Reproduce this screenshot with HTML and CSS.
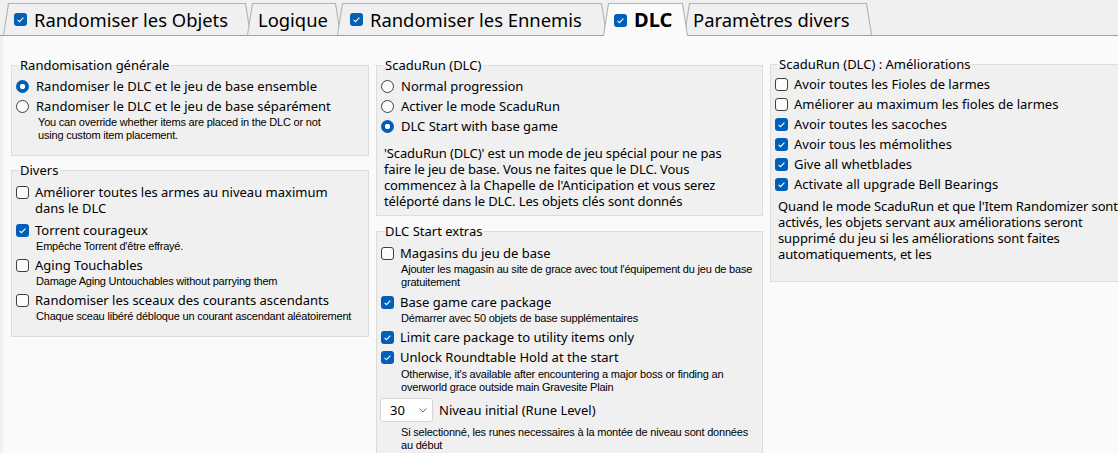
FILE: index.html
```html
<!DOCTYPE html>
<html lang="fr">
<head>
<meta charset="utf-8">
<title>DLC</title>
<link rel="stylesheet" href="styles.css">
</head>
<body>
<div class="tabs">
  <div class="tab t1"><div class="tab-in"><span class="cb on"><svg viewBox="0 0 13 13" width="13" height="13"><path d="M3.6 6.9 5.5 8.7 9.4 4.6" fill="none" stroke="#fff" stroke-width="1.1"/></svg></span><span class="tab-label">Randomiser les Objets</span></div></div>
  <div class="tab t2"><div class="tab-in"><span class="tab-label">Logique</span></div></div>
  <div class="tab t3"><div class="tab-in"><span class="cb on"><svg viewBox="0 0 13 13" width="13" height="13"><path d="M3.6 6.9 5.5 8.7 9.4 4.6" fill="none" stroke="#fff" stroke-width="1.1"/></svg></span><span class="tab-label">Randomiser les Ennemis</span></div></div>
  <div class="tab t4 active"><div class="tab-in"><span class="cb on"><svg viewBox="0 0 13 13" width="13" height="13"><path d="M3.6 6.9 5.5 8.7 9.4 4.6" fill="none" stroke="#fff" stroke-width="1.1"/></svg></span><span class="tab-label">DLC</span></div></div>
  <div class="tab t5"><div class="tab-in"><span class="tab-label">Paramètres divers</span></div></div>
</div>

<div class="page">
  <div class="col">
    <fieldset class="grp g-gen">
      <legend>Randomisation générale</legend>
      <div class="opt"><span class="rb on"></span><span class="lbl">Randomiser le DLC et le jeu de base ensemble</span></div>
      <div class="opt"><span class="rb"></span><span class="lbl">Randomiser le DLC et le jeu de base séparément</span></div>
      <div class="note nr">You can override whether items are placed in the DLC or not<br>using custom item placement.</div>
    </fieldset>

    <fieldset class="grp g-div">
      <legend>Divers</legend>
      <div class="opt wrap"><span class="cb"></span><span class="lbl">Améliorer toutes les armes au niveau maximum<br>dans le DLC</span></div>
      <div class="opt"><span class="cb on"><svg viewBox="0 0 13 13" width="13" height="13"><path d="M3.6 6.9 5.5 8.7 9.4 4.6" fill="none" stroke="#fff" stroke-width="1.1"/></svg></span><span class="lbl">Torrent courageux</span></div>
      <div class="note mb2">Empêche Torrent d'être effrayé.</div>
      <div class="opt"><span class="cb"></span><span class="lbl">Aging Touchables</span></div>
      <div class="note mb2">Damage Aging Untouchables without parrying them</div>
      <div class="opt"><span class="cb"></span><span class="lbl">Randomiser les sceaux des courants ascendants</span></div>
      <div class="note">Chaque sceau libéré débloque un courant ascendant aléatoirement</div>
    </fieldset>
  </div>

  <div class="col">
    <fieldset class="grp g-scadu">
      <legend>ScaduRun (DLC)</legend>
      <div class="opt"><span class="rb"></span><span class="lbl">Normal progression</span></div>
      <div class="opt"><span class="rb"></span><span class="lbl">Activer le mode ScaduRun</span></div>
      <div class="opt"><span class="rb on"></span><span class="lbl">DLC Start with base game</span></div>
      <p class="para">'ScaduRun (DLC)' est un mode de jeu spécial pour ne pas<br>faire le jeu de base. Vous ne faites que le DLC. Vous<br>commencez à la Chapelle de l'Anticipation et vous serez<br>téléporté dans le DLC. Les objets clés sont donnés</p>
    </fieldset>

    <fieldset class="grp g-extras">
      <legend>DLC Start extras</legend>
      <div class="opt"><span class="cb"></span><span class="lbl">Magasins du jeu de base</span></div>
      <div class="note mb3">Ajouter les magasin au site de grace avec tout l'équipement du jeu de base<br>gratuitement</div>
      <div class="opt"><span class="cb on"><svg viewBox="0 0 13 13" width="13" height="13"><path d="M3.6 6.9 5.5 8.7 9.4 4.6" fill="none" stroke="#fff" stroke-width="1.1"/></svg></span><span class="lbl">Base game care package</span></div>
      <div class="note mb2">Démarrer avec 50 objets de base supplémentaires</div>
      <div class="opt"><span class="cb on"><svg viewBox="0 0 13 13" width="13" height="13"><path d="M3.6 6.9 5.5 8.7 9.4 4.6" fill="none" stroke="#fff" stroke-width="1.1"/></svg></span><span class="lbl">Limit care package to utility items only</span></div>
      <div class="opt"><span class="cb on"><svg viewBox="0 0 13 13" width="13" height="13"><path d="M3.6 6.9 5.5 8.7 9.4 4.6" fill="none" stroke="#fff" stroke-width="1.1"/></svg></span><span class="lbl">Unlock Roundtable Hold at the start</span></div>
      <div class="note mt1">Otherwise, it's available after encountering a major boss or finding an<br>overworld grace outside main Gravesite Plain</div>
      <div class="combo-row">
        <div class="combo"><span>30</span><svg width="8" height="5" viewBox="0 0 8 5"><path d="M0.5 0.5 4 4 7.5 0.5" fill="none" stroke="#6a6a6a" stroke-width="1"/></svg></div>
        <span class="lbl">Niveau initial (Rune Level)</span>
      </div>
      <div class="note mt4">Si selectionné, les runes necessaires à la montée de niveau sont données<br>au début</div>
    </fieldset>
  </div>

  <div class="col col3">
    <fieldset class="grp g-ameli">
      <legend>ScaduRun (DLC) : Améliorations</legend>
      <div class="opt"><span class="cb"></span><span class="lbl">Avoir toutes les Fioles de larmes</span></div>
      <div class="opt"><span class="cb"></span><span class="lbl">Améliorer au maximum les fioles de larmes</span></div>
      <div class="opt"><span class="cb on"><svg viewBox="0 0 13 13" width="13" height="13"><path d="M3.6 6.9 5.5 8.7 9.4 4.6" fill="none" stroke="#fff" stroke-width="1.1"/></svg></span><span class="lbl">Avoir toutes les sacoches</span></div>
      <div class="opt"><span class="cb on"><svg viewBox="0 0 13 13" width="13" height="13"><path d="M3.6 6.9 5.5 8.7 9.4 4.6" fill="none" stroke="#fff" stroke-width="1.1"/></svg></span><span class="lbl">Avoir tous les mémolithes</span></div>
      <div class="opt"><span class="cb on"><svg viewBox="0 0 13 13" width="13" height="13"><path d="M3.6 6.9 5.5 8.7 9.4 4.6" fill="none" stroke="#fff" stroke-width="1.1"/></svg></span><span class="lbl">Give all whetblades</span></div>
      <div class="opt"><span class="cb on"><svg viewBox="0 0 13 13" width="13" height="13"><path d="M3.6 6.9 5.5 8.7 9.4 4.6" fill="none" stroke="#fff" stroke-width="1.1"/></svg></span><span class="lbl">Activate all upgrade Bell Bearings</span></div>
      <p class="para p3">Quand le mode ScaduRun et que l'Item Randomizer sont<br>activés, les objets servant aux améliorations seront<br>supprimé du jeu si les améliorations sont faites<br>automatiquements, et les</p>
    </fieldset>
  </div>
</div>
</body>
</html>
```

FILE: styles.css
```css
html, body {
  margin: 0;
  padding: 0;
}
body {
  width: 1118px;
  height: 453px;
  overflow: hidden;
  background: #f0f0f0;
  font-family: "Noto Sans", "Open Sans", sans-serif;
  font-size: 13px;
  color: #000;
}

/* ---------- tabs ---------- */
.tabs {
  display: flex;
  align-items: flex-start;
  height: 32px;
  padding: 3px 0 0 3px;
  border-bottom: 1px solid #a0a0a0;
}
.tab {
  flex: none;
  display: flex;
  height: 32px;
  box-sizing: border-box;
  padding: 1px 1px 0;
  margin-right: -4px;
  background: #b2b2b2;
  clip-path: polygon(5px 0, calc(100% - 5px) 0, 100% 100%, 0 100%);
}
.tab-in {
  flex: 1;
  display: flex;
  align-items: center;
  padding-left: 10px;
  background: #f0f0f0;
  clip-path: polygon(5px 0, calc(100% - 5px) 0, 100% 100%, 0 100%);
}
.tab .cb {
  margin-right: 7px;
}
.tab-label {
  font-size: 18.4px;
  white-space: nowrap;
  line-height: 24px;
}
.t1 { width: 248px; }
.t2 { width: 94px; }
.t3 { width: 270px; }
.t3 .tab-in { padding-left: 12px; }
.t4 { width: 85px; }
.t5 { width: 188px; }
.t5 .tab-in { padding-left: 8px; }
.tab.active {
  height: 33px;
  margin-bottom: -1px;
  z-index: 2;
}
.tab.active .tab-in {
  background: #fafafa;
}
.tab.active .tab-label {
  font-weight: 700;
  font-size: 20px;
}

/* ---------- page ---------- */
.page {
  display: grid;
  grid-template-columns: 358px 387px 360px;
  column-gap: 7px;
  align-items: start;
  height: 417px;
  box-sizing: border-box;
  margin-left: 3px;
  padding: 21px 0 0 8px;
  background: #fafafa;
  overflow: hidden;
}
.col {
  display: flex;
  flex-direction: column;
}
.col3 {
  margin-top: -1px;
}

.grp {
  margin: 0;
  min-width: 0;
  border: 1px solid #dcdcdc;
  padding: 3px 6px 13px 4px;
  background: #f0f0f0;
}
.grp legend {
  padding: 0 2px;
  margin-left: 2px;
  line-height: 16px;
  font-size: 13px;
}
.g-div { margin-top: 6px; }
.g-scadu { padding-bottom: 6px; }
.g-extras { margin-top: 7px; padding-top: 4px; padding-bottom: 20px; }
.g-ameli { padding-top: 2px; padding-bottom: 19px; }

/* ---------- options ---------- */
.opt {
  display: flex;
  align-items: center;
  height: 20px;
  white-space: nowrap;
}
.opt.wrap {
  height: auto;
  align-items: flex-start;
  line-height: 16px;
  padding: 3px 0 4px;
}
.opt.wrap .cb {
  margin-top: 2px;
}
.cb, .rb {
  flex: none;
  width: 13px;
  height: 13px;
  box-sizing: border-box;
  border: 1px solid #3f3f3f;
  background: #fcfcfc;
}
.cb {
  border-radius: 3px;
  margin-right: 6px;
}
.cb svg {
  display: block;
}
.cb.on {
  border: none;
  background: #005fb8;
}
.rb {
  border-radius: 50%;
  margin-right: 7px;
}
.rb.on {
  border: none;
  background: radial-gradient(circle, #fff 0 2.4px, #005fb8 3px);
}

.note {
  font-family: "Liberation Sans", Arial, sans-serif;
  font-size: 11px;
  line-height: 13px;
  letter-spacing: -0.2px;
  margin-left: 20px;
  white-space: nowrap;
}
.note.nr { margin-left: 22px; }
.mb2 { margin-bottom: 2px; }
.mb3 { margin-bottom: 3px; }
.mt1 { margin-top: 1px; }
.mt4 { margin-top: 4px; }

.para {
  margin: 9px 0 0 3px;
  line-height: 16px;
  letter-spacing: -0.12px;
  white-space: nowrap;
}
.para.p3 {
  margin-top: 4px;
}

/* ---------- combo ---------- */
.combo-row {
  display: flex;
  align-items: center;
  margin-top: 4px;
  white-space: nowrap;
}
.combo {
  display: flex;
  align-items: center;
  justify-content: space-between;
  width: 53px;
  height: 24px;
  box-sizing: border-box;
  margin-left: -1px;
  margin-right: 6px;
  padding: 0 5px 0 9px;
  border: 1px solid #d4d4d4;
  border-radius: 3px;
  background: #fff;
}
```
